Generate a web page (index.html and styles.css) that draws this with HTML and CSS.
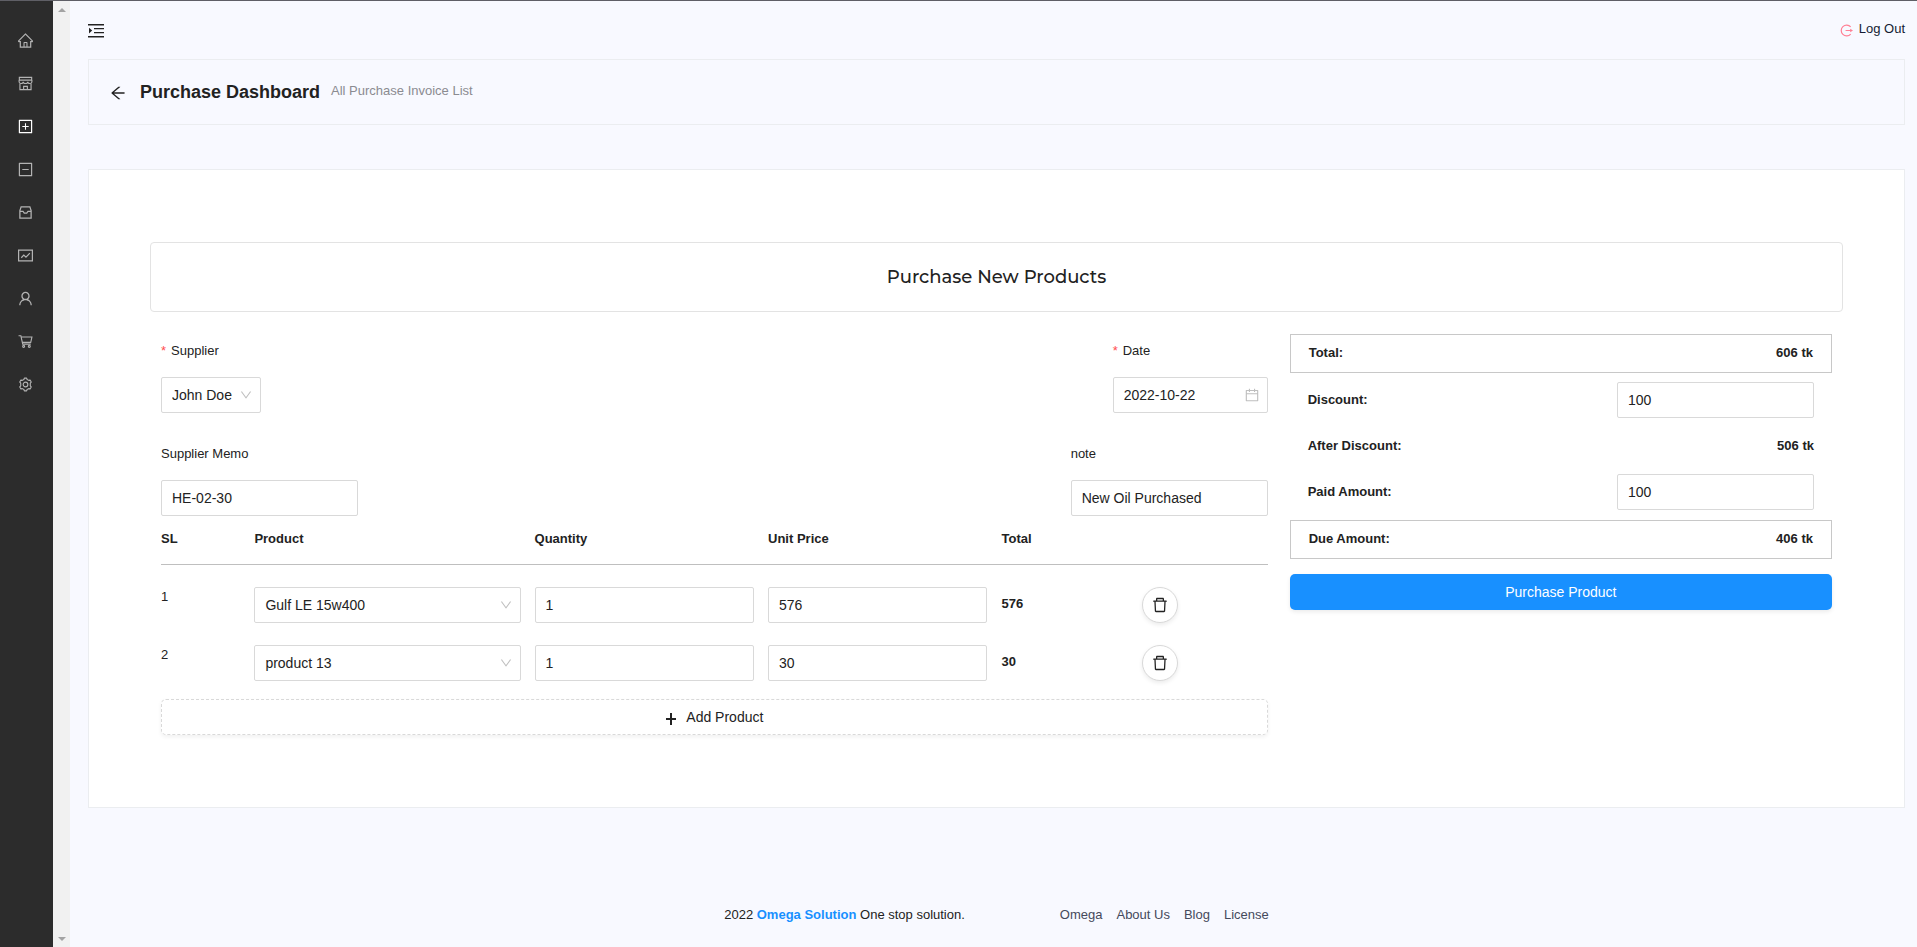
FILE: index.html
```html
<!DOCTYPE html>
<html lang="en">
<head>
    <meta charset="UTF-8">
    <meta name="viewport" content="width=device-width, initial-scale=1.0">
    <title>Purchase Dashboard</title>
    <link rel="stylesheet" href="styles.css">
</head>
<body>
    <svg class="sprite" aria-hidden="true">
        <symbol id="i-home" viewBox="64 64 896 896"><path d="M946.5 505L560.1 118.8l-25.9-25.9a31.5 31.5 0 00-44.4 0L77.5 505a63.9 63.9 0 00-18.8 46c.4 35.2 29.7 63.3 64.9 63.3h42.5V940h691.8V614.3h43.4c17.1 0 33.2-6.7 45.3-18.8a63.6 63.6 0 0018.7-45.3c0-17-6.7-33.1-18.8-45.2zM568 868H456V664h112v204zm217.9-325.7V868H632V640c0-22.1-17.9-40-40-40H432c-22.1 0-40 17.9-40 40v228H238.1V542.3h-96l370-369.7 23.1 23.1L882 542.3h-96.1z"/></symbol>
        <symbol id="i-shop" viewBox="64 64 896 896"><g fill="none" stroke="currentColor" stroke-width="68"><path d="M144 150h736v160H144zM180 500v376h664V500M130 310v90c0 70 50 110 110 110s136-40 136-110c0 70 70 110 136 110s136-40 136-110c0 70 70 110 136 110s110-40 110-110v-90M400 876V680h224v196"/></g></symbol>
        <symbol id="i-plus-square" viewBox="64 64 896 896"><path d="M328 544h152v152c0 4.400 3.600 8 8 8h48c4.400 0 8-3.600 8-8V544h152c4.400 0 8-3.600 8-8v-48c0-4.400-3.600-8-8-8H544V328c0-4.400-3.600-8-8-8h-48c-4.400 0-8 3.600-8 8v152H328c-4.400 0-8 3.600-8 8v48c0 4.400 3.600 8 8 8z"/><path d="M880 112H144c-17.700 0-32 14.300-32 32v736c0 17.700 14.300 32 32 32h736c17.700 0 32-14.300 32-32V144c0-17.700-14.300-32-32-32zm-40 728H184V184h656v656z"/></symbol>
        <symbol id="i-minus-square" viewBox="64 64 896 896"><path d="M328 544h368c4.400 0 8-3.600 8-8v-48c0-4.400-3.600-8-8-8H328c-4.400 0-8 3.600-8 8v48c0 4.400 3.600 8 8 8z"/><path d="M880 112H144c-17.700 0-32 14.300-32 32v736c0 17.700 14.300 32 32 32h736c17.700 0 32-14.300 32-32V144c0-17.700-14.300-32-32-32zm-40 728H184V184h656v656z"/></symbol>
        <symbol id="i-inbox" viewBox="2 2 12 12"><path fill="none" stroke="currentColor" d="M3.500 6.500v6h9v-6l-1-3h-7zM3.500 7h2.500l1 1.500h2l1-1.500h2.500"/></symbol>
        <symbol id="i-fund" viewBox="64 64 896 896"><path fill="none" stroke="currentColor" stroke-width="72" d="M100 196h824v632H100zM260 645l150-160 130 130 230-240"/></symbol>
        <symbol id="i-user" viewBox="64 64 896 896"><path d="M858.500 763.600a374 374 0 00-80.600-119.500 375.630 375.630 0 00-119.500-80.600c-.4-.2-.8-.3-1.200-.5C719.500 518 760 444.700 760 362c0-137-111-248-248-248S264 225 264 362c0 82.700 40.500 156 102.800 201.100-.4.2-.8.3-1.200.5-44.800 18.900-85 46-119.500 80.600a375.630 375.630 0 00-80.600 119.500A371.700 371.700 0 00136 901.800a8 8 0 008 8.200h60c4.400 0 7.900-3.500 8-7.800 2-77.200 33-149.500 87.800-204.300 56.700-56.700 132-87.900 212.200-87.900s155.500 31.200 212.200 87.900C779 752.700 810 825 812 902.200c.1 4.400 3.600 7.800 8 7.800h60a8 8 0 008-8.200c-1-47.800-10.900-94.300-29.500-138.200zM512 534c-45.900 0-89.100-17.900-121.600-50.400S340 407.900 340 362c0-45.900 17.900-89.100 50.400-121.600S466.100 190 512 190s89.100 17.900 121.600 50.400S684 316.100 684 362c0 45.900-17.900 89.100-50.400 121.600S557.900 534 512 534z"/></symbol>
        <symbol id="i-cart" viewBox="64 64 896 896"><g fill="none" stroke="currentColor" stroke-width="66"><path d="M96 170h140l110 500h480M256 246h640l-72 320H330"/><circle cx="400" cy="800" r="60"/><circle cx="740" cy="800" r="60"/></g></symbol>
        <symbol id="i-setting" viewBox="0 0 16 16"><g fill="none" stroke="currentColor" stroke-width="1.200" stroke-linejoin="round"><path d="M6.300 2.600 6.800 1.200h2.400l.5 1.400 1.700 1 1.500-.3 1.200 2.100-1 1.200v2.800l1 1.200-1.200 2.100-1.500-.3-1.700 1-.5 1.400H6.800l-.5-1.400-1.700-1-1.500.3-1.200-2.100 1-1.200V6.600l-1-1.200 1.200-2.100 1.500.3z"/><circle cx="8" cy="8" r="2.500"/></g></symbol>
        <symbol id="i-indent" viewBox="0 0 16 16"><path d="M0 1h16v1.400H0zM6 5h10v1.300H6zM6 9h10v1.300H6zM0 13h16v1.400H0zM1 4.800l3.200 2.800L1 10.400z"/></symbol>
        <symbol id="i-logout" viewBox="0 0 14 14"><path fill="none" stroke="currentColor" stroke-width="1.300" d="M11.500 3.200a5.800 5.800 0 1 0 0 7.600M6 7h6.500"/><path d="M11 5l3 2-3 2z"/></symbol>
        <symbol id="i-back" viewBox="64 64 896 896"><path d="M872 474H286.900l350.200-304c5.600-4.900 2.200-14-5.200-14h-88.500c-3.900 0-7.600 1.400-10.500 3.900L155 487.800a31.960 31.960 0 000 48.300L535.100 866c1.500 1.300 3.300 2 5.200 2h91.500c7.400 0 10.800-9.200 5.200-14L286.900 550H872c4.400 0 8-3.600 8-8v-60c0-4.400-3.600-8-8-8z"/></symbol>
        <symbol id="i-down" viewBox="64 64 896 896"><path d="M884 256h-75c-5.100 0-9.900 2.500-12.900 6.600L512 654.200 227.900 262.600c-3-4.100-7.800-6.600-12.900-6.600h-75c-6.500 0-10.300 7.400-6.500 12.700l352.600 486.100c12.800 17.600 39 17.600 51.700 0l352.600-486.100c3.900-5.300.1-12.700-6.400-12.700z"/></symbol>
        <symbol id="i-calendar" viewBox="64 64 896 896"><path d="M880 184H712v-64c0-4.400-3.600-8-8-8h-56c-4.400 0-8 3.600-8 8v64H384v-64c0-4.400-3.600-8-8-8h-56c-4.400 0-8 3.600-8 8v64H144c-17.700 0-32 14.300-32 32v664c0 17.700 14.300 32 32 32h736c17.700 0 32-14.300 32-32V216c0-17.700-14.300-32-32-32zm-40 656H184V460h656v380zM184 392V256h128v48c0 4.400 3.600 8 8 8h56c4.400 0 8-3.600 8-8v-48h256v48c0 4.400 3.600 8 8 8h56c4.400 0 8-3.600 8-8v-48h128v136H184z"/></symbol>
        <symbol id="i-delete" viewBox="64 64 896 896"><path d="M360 184h304v72h72v-80c0-35.300-28.700-64-64-64H352c-35.300 0-64 28.700-64 64v80h72v-72zm504 72H160c-17.700 0-32 14.300-32 32v32c0 4.400 3.600 8 8 8h60.400l24.700 523c1.600 34.100 29.800 61 63.900 61h454c34.200 0 62.300-26.800 63.900-61l24.700-523H888c4.400 0 8-3.600 8-8v-32c0-17.700-14.300-32-32-32zM731.300 840H292.700l-24.200-512h487l-24.200 512z"/></symbol>
        <symbol id="i-plus" viewBox="0 0 12 12"><path d="M5 0h2v5h4v2H7v5H5V7H1V5h4z"/></symbol>
    </svg>

    <aside class="sidebar">
        <nav class="menu">
            <a href="#" aria-label="Dashboard"><svg><use href="#i-home"/></svg></a>
            <a href="#" aria-label="Products"><svg><use href="#i-shop"/></svg></a>
            <a href="#" class="active" aria-label="Purchase"><svg><use href="#i-plus-square"/></svg></a>
            <a href="#" aria-label="Sale"><svg><use href="#i-minus-square"/></svg></a>
            <a href="#" aria-label="Inventory"><svg><use href="#i-inbox"/></svg></a>
            <a href="#" aria-label="Accounts"><svg><use href="#i-fund"/></svg></a>
            <a href="#" aria-label="Customers"><svg><use href="#i-user"/></svg></a>
            <a href="#" aria-label="Suppliers"><svg><use href="#i-cart"/></svg></a>
            <a href="#" aria-label="Settings"><svg><use href="#i-setting"/></svg></a>
        </nav>
    </aside>
    <div class="scroll-track">
        <span class="arrow-up"></span>
        <span class="arrow-down"></span>
    </div>

    <div class="page">
        <header class="topbar">
            <button type="button" class="icon-button" aria-label="Toggle menu"><svg class="toggle-icon"><use href="#i-indent"/></svg></button>
            <a href="#" class="logout"><svg><use href="#i-logout"/></svg>Log Out</a>
        </header>

        <div class="page-header">
            <button type="button" class="icon-button" aria-label="Back"><svg class="back-icon"><use href="#i-back"/></svg></button>
            <h1>Purchase Dashboard</h1>
            <span class="subtitle">All Purchase Invoice List</span>
        </div>

        <main class="card">
            <h2 class="form-title">Purchase New Products</h2>
            <form class="purchase-form">
                <section class="details">
                    <div class="form-row">
                        <div class="form-group">
                            <label for="supplier" class="required">Supplier</label>
                            <div class="field supplier-field">
                                <select id="supplier"><option>John Doe</option></select>
                                <svg><use href="#i-down"/></svg>
                            </div>
                        </div>
                        <div class="form-group">
                            <label for="date" class="required">Date</label>
                            <div class="field date-field">
                                <input type="text" id="date" value="2022-10-22">
                                <svg><use href="#i-calendar"/></svg>
                            </div>
                        </div>
                    </div>
                    <div class="form-row">
                        <div class="form-group">
                            <label for="memo">Supplier Memo</label>
                            <input type="text" id="memo" class="text-field" value="HE-02-30">
                        </div>
                        <div class="form-group">
                            <label for="note">note</label>
                            <input type="text" id="note" class="text-field" value="New Oil Purchased">
                        </div>
                    </div>

                    <table class="products">
                        <thead>
                            <tr><th>SL</th><th>Product</th><th>Quantity</th><th>Unit Price</th><th>Total</th></tr>
                        </thead>
                        <tbody>
                            <tr>
                                <td>1</td>
                                <td>
                                    <div class="field">
                                        <select aria-label="Product 1"><option>Gulf LE 15w400</option></select>
                                        <svg><use href="#i-down"/></svg>
                                    </div>
                                </td>
                                <td><input type="text" aria-label="Quantity 1" value="1"></td>
                                <td><input type="text" aria-label="Unit price 1" value="576"></td>
                                <td class="row-total">576</td>
                                <td><button type="button" class="delete" aria-label="Delete row 1"><svg><use href="#i-delete"/></svg></button></td>
                            </tr>
                            <tr>
                                <td>2</td>
                                <td>
                                    <div class="field">
                                        <select aria-label="Product 2"><option>product 13</option></select>
                                        <svg><use href="#i-down"/></svg>
                                    </div>
                                </td>
                                <td><input type="text" aria-label="Quantity 2" value="1"></td>
                                <td><input type="text" aria-label="Unit price 2" value="30"></td>
                                <td class="row-total">30</td>
                                <td><button type="button" class="delete" aria-label="Delete row 2"><svg><use href="#i-delete"/></svg></button></td>
                            </tr>
                        </tbody>
                    </table>
                    <button type="button" class="add-product"><svg><use href="#i-plus"/></svg>Add Product</button>
                </section>

                <section class="summary">
                    <div class="summary-row boxed"><span>Total:</span><span>606 tk</span></div>
                    <div class="summary-row">
                        <label for="discount">Discount:</label>
                        <input type="text" id="discount" class="text-field" value="100">
                    </div>
                    <div class="summary-row"><span>After Discount:</span><span>506 tk</span></div>
                    <div class="summary-row">
                        <label for="paid">Paid Amount:</label>
                        <input type="text" id="paid" class="text-field" value="100">
                    </div>
                    <div class="summary-row boxed"><span>Due Amount:</span><span>406 tk</span></div>
                    <button type="submit" class="submit">Purchase Product</button>
                </section>
            </form>
        </main>

        <footer class="footer">
            <p>2022 <a href="#">Omega Solution</a> One stop solution.</p>
            <nav class="footer-links">
                <a href="#">Omega</a>
                <a href="#">About Us</a>
                <a href="#">Blog</a>
                <a href="#">License</a>
            </nav>
        </footer>
    </div>
</body>
</html>
```

FILE: styles.css
```css
* {
    box-sizing: border-box;
}

body {
    margin: 0;
    min-height: 100vh;
    display: flex;
    border-top: 1px solid #5f5f66;
    background-color: #f8f9ff;
    color: #222;
    font-family: "Liberation Sans", Arial, sans-serif;
    font-size: 13px;
    line-height: 20px;
}

svg {
    display: block;
    width: 16px;
    height: 16px;
    fill: currentColor;
}

a {
    color: inherit;
    text-decoration: none;
}

.sprite {
    display: none;
}

/* Sidebar */
.sidebar {
    width: 53px;
    flex-shrink: 0;
    background: #2c2c2c;
}

.menu {
    padding-top: 18px;
}

.menu a {
    display: flex;
    align-items: center;
    height: 43px;
    padding-left: 18px;
    color: #b3b3b3;
}

.menu a.active {
    color: #fff;
}

.menu svg {
    width: 15px;
    height: 15px;
}

.scroll-track {
    width: 17px;
    flex-shrink: 0;
    display: flex;
    flex-direction: column;
    justify-content: space-between;
    align-items: center;
    padding: 7px 0 6px;
    background: #f1f1f1;
}

.arrow-up,
.arrow-down {
    border: 4px solid transparent;
}

.arrow-up {
    border-top: 0;
    border-bottom-color: #a3a3a3;
}

.arrow-down {
    border-bottom: 0;
    border-top-color: #a3a3a3;
}

.page {
    flex: 1;
    display: flex;
    flex-direction: column;
    padding: 0 12px 0 18px;
}

/* Header */
.topbar {
    display: flex;
    justify-content: space-between;
    height: 58px;
    padding-top: 18px;
}

.icon-button {
    padding: 0;
    border: none;
    background: none;
    color: #222;
    cursor: pointer;
}

.topbar .icon-button {
    height: 24px;
}

.logout {
    display: flex;
    align-items: center;
    gap: 6px;
    height: 20px;
    color: #141c33;
    font-weight: 500;
}

.logout svg {
    width: 13px;
    height: 13px;
    margin-top: 2px;
    color: #ff8095;
}

.page-header {
    display: flex;
    align-items: center;
    height: 66px;
    padding: 0 21px;
    border: 1px solid #ebedf0;
}

.back-icon {
    margin-top: 2px;
}

.page-header h1 {
    margin: 0 11px 0 14px;
    font-size: 18px;
}

.subtitle {
    padding-bottom: 2px;
    color: #8b8b91;
}

/* Form card */
.card {
    margin-top: 44px;
    padding: 72px 61px;
    border: 1px solid #ebedf0;
    background: #fff;
}

.form-title {
    margin: 0;
    padding: 23px 0;
    border: 1px solid #e3e3e3;
    border-radius: 4px;
    font-family: Montserrat, Inter, sans-serif;
    font-size: 18px;
    font-weight: 500;
    line-height: 22px;
    text-align: center;
}

.purchase-form {
    display: grid;
    grid-template-columns: 2fr 1fr;
    padding-top: 22px;
}

.details,
.summary {
    min-width: 0;
    padding: 0 11px;
}

.form-row {
    display: flex;
    justify-content: space-between;
}

.form-row + .form-row {
    margin-top: 24px;
}

.form-group label {
    display: block;
    padding: 7px 0 16px;
}

.form-group .required::before {
    content: "*";
    margin-right: 5px;
    color: #ff4d4f;
}

input,
select {
    display: block;
    width: 100%;
    height: 36px;
    padding: 0 10px;
    border: 1px solid #d9d9d9;
    border-radius: 2px;
    background: #fff;
    color: #222;
    font: 14px "Liberation Sans", Arial, sans-serif;
    appearance: none;
}

.field {
    position: relative;
}

.field svg {
    position: absolute;
    top: 12px;
    right: 9px;
    width: 12px;
    height: 12px;
    color: #bfbfbf;
    pointer-events: none;
}

.supplier-field {
    width: 100px;
}

.date-field {
    width: 155px;
}

.date-field svg {
    width: 14px;
    height: 14px;
    top: 11px;
}

.text-field {
    width: 197px;
}

/* Products table */
.products,
.products thead,
.products tbody {
    display: block;
}

.products tr {
    display: grid;
    grid-template-columns: repeat(24, 1fr);
    column-gap: 14px;
}

.products th,
.products td {
    grid-column: span 5;
    min-width: 0;
    padding: 0;
    text-align: left;
}

.products tr > :nth-child(1) {
    grid-column: span 2;
}

.products tr > :nth-child(2) {
    grid-column: span 6;
}

.products tr > :nth-child(n+5) {
    grid-column: span 3;
}

.products thead {
    padding: 13px 0 15px;
    border-bottom: 1px solid #bfbfbf;
}

.products tbody tr {
    margin-top: 22px;
}

.products .row-total {
    padding-top: 7px;
    font-weight: bold;
}

.delete {
    display: flex;
    align-items: center;
    justify-content: center;
    width: 36px;
    height: 36px;
    padding: 0;
    border: 1px solid #d9d9d9;
    border-radius: 50%;
    background: #fff;
    box-shadow: 0 2px 4px rgba(0, 0, 0, 0.08);
    color: #222;
    cursor: pointer;
}

.add-product {
    display: flex;
    align-items: center;
    justify-content: center;
    gap: 9px;
    width: 100%;
    height: 36px;
    margin-top: 18px;
    border: 1px dashed #d9d9d9;
    border-radius: 5px;
    background: #fff;
    box-shadow: 0 2px 4px rgba(0, 0, 0, 0.06);
    color: #222;
    font: 14px "Liberation Sans", Arial, sans-serif;
    cursor: pointer;
}

.add-product svg {
    width: 12px;
    height: 12px;
    margin-top: 4px;
}

/* Summary */
.summary-row {
    display: flex;
    justify-content: space-between;
    align-items: flex-start;
    height: 46px;
    padding: 6px 18px 0;
    font-weight: bold;
}

.summary-row label,
.summary-row span {
    padding-top: 2px;
}

.summary-row .text-field {
    margin-top: -6px;
}

.summary-row.boxed {
    height: 39px;
    border: 1px solid #c8c8c8;
}

.summary-row.boxed:first-child {
    margin-bottom: 9px;
}

.submit {
    width: 100%;
    height: 36px;
    margin-top: 15px;
    border: none;
    border-radius: 5px;
    background: #1890ff;
    box-shadow: 0 2px 4px rgba(0, 0, 0, 0.08);
    color: #fff;
    font: 14px "Liberation Sans", Arial, sans-serif;
    cursor: pointer;
}

/* Footer */
.footer {
    display: flex;
    justify-content: center;
    gap: 95px;
    margin-top: auto;
    padding-bottom: 22px;
}

.footer p {
    margin: 0;
}

.footer p a {
    color: #1890ff;
    font-weight: bold;
}

.footer-links {
    display: flex;
    gap: 14px;
    color: #454a5c;
}
```
